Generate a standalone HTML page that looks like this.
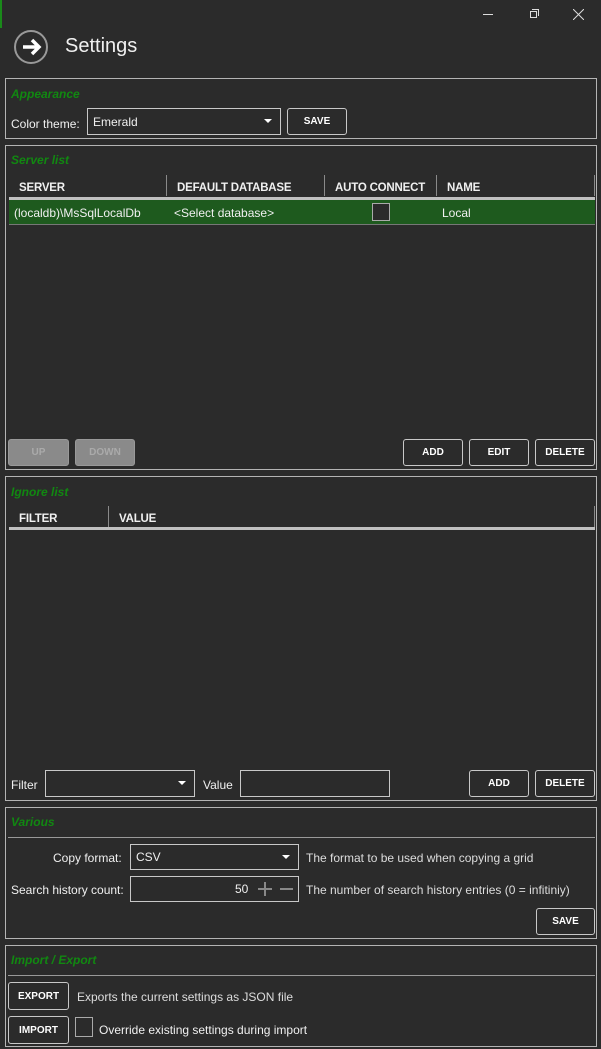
<!DOCTYPE html>
<html><head><meta charset="utf-8"><style>
body{margin:0;width:601px;height:1049px;background:#2b2b2b;font-family:"Liberation Sans",sans-serif;color:#f0f0f0;position:relative;overflow:hidden;font-size:12px}
.a{position:absolute}
.panel{position:absolute;left:5px;width:592px;border:1px solid #b4b4b4;box-sizing:border-box}
.t{position:absolute;color:#118811;font-weight:bold;font-style:italic;font-size:12px}
.btn{position:absolute;border:1px solid #c8c8c8;border-radius:3px;box-sizing:border-box;font-weight:bold;font-size:10px;display:flex;align-items:center;justify-content:center;color:#fff}
.dis{background:#8a8a8a;color:#aaa;border-color:#999}
.box{position:absolute;border:1px solid #c8c8c8;box-sizing:border-box;display:flex;align-items:center;padding-left:5px}
.arr{position:absolute;right:8px;top:10px;width:0;height:0;border-left:4px solid transparent;border-right:4px solid transparent;border-top:4px solid #fff}
.hd{position:absolute;font-weight:bold;font-size:11.5px;letter-spacing:-0.2px}
.sep{position:absolute;width:1px;background:#8a8a8a}
.hr{position:absolute;height:1px;background:#999}
</style></head><body>
<div class="a" style="left:0;top:0;width:2px;height:28px;background:#1a8a1a"></div>
<div class="a" style="left:483px;top:14px;width:10px;height:1px;background:#ddd"></div>
<div class="a" style="left:530px;top:11px;width:7px;height:7px;border:1px solid #ddd;box-sizing:border-box"></div>
<div class="a" style="left:532px;top:9px;width:7px;height:7px;border-top:1px solid #ddd;border-right:1px solid #ddd;box-sizing:border-box"></div>
<svg class="a" style="left:573px;top:9px" width="11" height="11"><path d="M0 0L11 11M11 0L0 11" stroke="#ddd" stroke-width="1"/></svg>
<svg class="a" style="left:13px;top:29px" width="36" height="36"><circle cx="18" cy="18" r="16" fill="none" stroke="#999" stroke-width="2"/><path d="M10 18H25M19 11L26 18L19 25" fill="none" stroke="#fff" stroke-width="3.5"/></svg>
<div class="a" style="left:65px;top:35px;font-size:20px">Settings</div>

<div class="panel" style="top:78px;height:61px"></div>
<div class="t" style="left:11px;top:87px">Appearance</div>
<div class="a" style="left:11px;top:117px">Color theme:</div>
<div class="box" style="left:87px;top:108px;width:194px;height:27px">Emerald<div class="arr"></div></div>
<div class="btn" style="left:287px;top:108px;width:60px;height:27px">SAVE</div>

<div class="panel" style="top:145px;height:325px"></div>
<div class="t" style="left:11px;top:153px">Server list</div>
<div class="hd" style="left:19px;top:182px">SERVER</div>
<div class="hd" style="left:177px;top:182px">DEFAULT DATABASE</div>
<div class="hd" style="left:335px;top:182px">AUTO CONNECT</div>
<div class="hd" style="left:447px;top:182px">NAME</div>
<div class="sep" style="left:166px;top:175px;height:21px"></div>
<div class="sep" style="left:324px;top:175px;height:21px"></div>
<div class="sep" style="left:436px;top:175px;height:21px"></div>
<div class="sep" style="left:594px;top:175px;height:21px"></div>
<div class="a" style="left:9px;top:197px;width:586px;height:3px;background:#c0c0c0"></div>
<div class="a" style="left:9px;top:200px;width:586px;height:24px;background:#1e5a1e"></div>
<div class="a" style="left:9px;top:224px;width:586px;height:1px;background:#777"></div>
<div class="a" style="left:14px;top:206px">(localdb)\MsSqlLocalDb</div>
<div class="a" style="left:174px;top:206px">&lt;Select database&gt;</div>
<div class="a" style="left:372px;top:203px;width:18px;height:18px;border:1px solid #aaa;box-sizing:border-box;background:#2b2b2b"></div>
<div class="a" style="left:442px;top:206px">Local</div>
<div class="btn dis" style="left:8px;top:439px;width:61px;height:27px">UP</div>
<div class="btn dis" style="left:75px;top:439px;width:60px;height:27px">DOWN</div>
<div class="btn" style="left:403px;top:439px;width:60px;height:27px">ADD</div>
<div class="btn" style="left:469px;top:439px;width:60px;height:27px">EDIT</div>
<div class="btn" style="left:535px;top:439px;width:60px;height:27px">DELETE</div>

<div class="panel" style="top:476px;height:325px"></div>
<div class="t" style="left:11px;top:485px">Ignore list</div>
<div class="hd" style="left:19px;top:513px">FILTER</div>
<div class="hd" style="left:119px;top:513px">VALUE</div>
<div class="sep" style="left:108px;top:506px;height:21px"></div>
<div class="sep" style="left:594px;top:506px;height:21px"></div>
<div class="a" style="left:9px;top:527px;width:586px;height:3px;background:#c0c0c0"></div>
<div class="a" style="left:11px;top:778px">Filter</div>
<div class="box" style="left:45px;top:770px;width:150px;height:27px"><div class="arr"></div></div>
<div class="a" style="left:203px;top:778px">Value</div>
<div class="box" style="left:240px;top:770px;width:150px;height:27px"></div>
<div class="btn" style="left:469px;top:770px;width:60px;height:27px">ADD</div>
<div class="btn" style="left:535px;top:770px;width:60px;height:27px">DELETE</div>

<div class="panel" style="top:807px;height:132px"></div>
<div class="t" style="left:11px;top:815px">Various</div>
<div class="hr" style="left:8px;top:837px;width:587px"></div>
<div class="a" style="left:53px;top:851px">Copy format:</div>
<div class="box" style="left:130px;top:844px;width:169px;height:26px">CSV<div class="arr"></div></div>
<div class="a" style="left:306px;top:851px;color:#ddd">The format to be used when copying a grid</div>
<div class="a" style="left:11px;top:883px">Search history count:</div>
<div class="box" style="left:130px;top:876px;width:169px;height:26px"><span style="position:absolute;left:104px">50</span>
<span style="position:absolute;left:127px;top:11px;width:14px;height:2px;background:#888"></span><span style="position:absolute;left:133px;top:5px;width:2px;height:14px;background:#888"></span>
<span style="position:absolute;left:149px;top:11px;width:13px;height:2px;background:#888"></span></div>
<div class="a" style="left:306px;top:883px;color:#ddd">The number of search history entries (0 = infitiniy)</div>
<div class="btn" style="left:536px;top:908px;width:59px;height:27px">SAVE</div>

<div class="panel" style="top:945px;height:102px"></div>
<div class="t" style="left:11px;top:953px">Import / Export</div>
<div class="hr" style="left:8px;top:975px;width:587px"></div>
<div class="btn" style="left:8px;top:982px;width:61px;height:28px">EXPORT</div>
<div class="a" style="left:77px;top:990px;color:#ddd">Exports the current settings as JSON file</div>
<div class="btn" style="left:8px;top:1016px;width:61px;height:28px">IMPORT</div>
<div class="a" style="left:75px;top:1017px;width:18px;height:20px;border:1px solid #aaa;box-sizing:border-box"></div>
<div class="a" style="left:99px;top:1023px">Override existing settings during import</div>
</body></html>
